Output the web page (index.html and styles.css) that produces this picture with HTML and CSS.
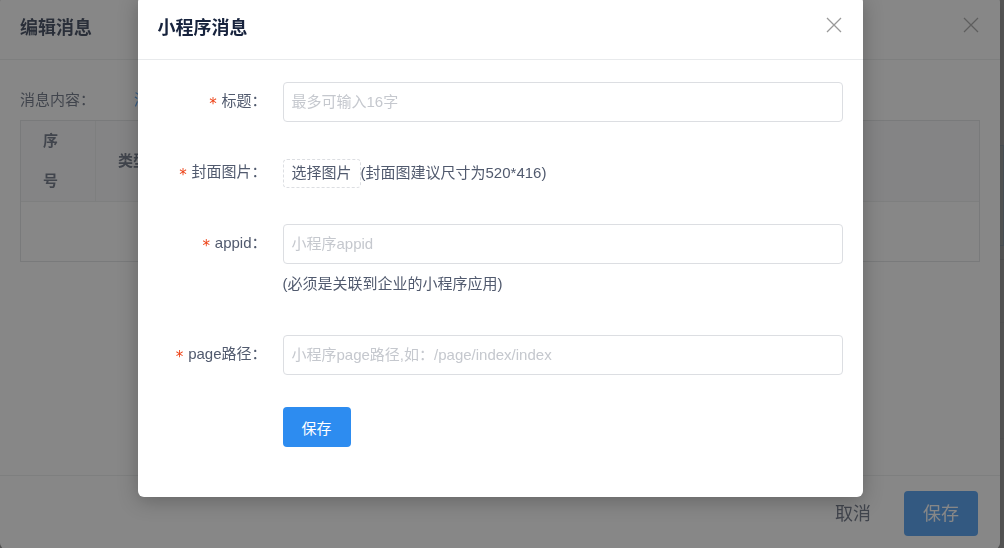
FILE: index.html
```
<!DOCTYPE html>
<html lang="zh-CN">
<head>
    <meta charset="UTF-8">
    <meta name="viewport" content="width=device-width, initial-scale=1.0">
    <title>编辑消息</title>
    <link rel="stylesheet" href="styles.css">
</head>
<body>
    <!-- page behind the dialogs -->
    <div class="page">
        <div class="page-alert"></div>
        <div class="page-row"></div>
        <div class="page-panel"></div>
    </div>

    <!-- edit message dialog -->
    <div class="mask">
        <section class="dialog dialog-edit">
            <header class="dialog-header">
                <h2>编辑消息</h2>
                <button type="button" class="close" aria-label="关闭">
                    <svg width="16" height="16" viewBox="0 0 16 16"><path d="M1 1L15 15M15 1L1 15"/></svg>
                </button>
            </header>
            <div class="edit-body">
                <div class="content-row">
                    <span class="content-label">消息内容：</span>
                    <a href="#">添加</a>
                </div>
                <table class="message-table">
                    <thead>
                        <tr>
                            <th class="col-index">序号</th>
                            <th>类型</th>
                        </tr>
                    </thead>
                    <tbody>
                        <tr>
                            <td colspan="2"></td>
                        </tr>
                    </tbody>
                </table>
            </div>
            <footer class="dialog-footer">
                <button type="button" class="btn-text">取消</button>
                <button type="button" class="btn-primary btn-large">保存</button>
            </footer>
        </section>
    </div>

    <!-- mini program dialog -->
    <div class="mask">
        <section class="dialog dialog-program">
            <header class="dialog-header">
                <h2>小程序消息</h2>
                <button type="button" class="close" aria-label="关闭">
                    <svg width="16" height="16" viewBox="0 0 16 16"><path d="M1 1L15 15M15 1L1 15"/></svg>
                </button>
            </header>
            <form class="program-form">
                <div class="form-item">
                    <label for="title">标题：</label>
                    <div class="form-content">
                        <input type="text" id="title" placeholder="最多可输入16字">
                    </div>
                </div>
                <div class="form-item">
                    <label for="cover">封面图片：</label>
                    <div class="form-content form-inline">
                        <button type="button" id="cover" class="btn-dashed">选择图片</button>
                        <span>(封面图建议尺寸为520*416)</span>
                    </div>
                </div>
                <div class="form-item">
                    <label for="appid">appid：</label>
                    <div class="form-content">
                        <input type="text" id="appid" placeholder="小程序appid">
                        <p>(必须是关联到企业的小程序应用)</p>
                    </div>
                </div>
                <div class="form-item">
                    <label for="path">page路径：</label>
                    <div class="form-content">
                        <input type="text" id="path" placeholder="小程序page路径,如：/page/index/index">
                    </div>
                </div>
                <div class="form-actions">
                    <button type="button" class="btn-primary">保存</button>
                </div>
            </form>
        </section>
    </div>
</body>
</html>
```
FILE: styles.css
```
* {
    box-sizing: border-box;
}

body {
    margin: 0;
    min-height: 100vh;
    overflow: hidden;
    background-color: #fff;
    color: #515a6e;
    font-family: "Liberation Sans", "Noto Sans CJK SC", sans-serif;
    font-size: 15px;
    line-height: 40px;
}

button,
input {
    font-family: inherit;
    font-size: inherit;
}

button {
    padding: 0;
    border: none;
    background: none;
    color: inherit;
    cursor: pointer;
}

.page {
    height: 100vh;
    padding-top: 145px;
}

.page-alert {
    height: 101px;
    background-color: #f0faff;
    border: 1px solid #abdcff;
}

.page-row {
    height: 64px;
    margin-top: 13px;
    border-top: 1px solid #dcdee2;
    border-bottom: 1px solid #e8eaec;
}

.page-panel {
    height: 116px;
    border-bottom: 1px solid #e8eaec;
}

.mask {
    position: fixed;
    inset: 0;
    padding-right: 4px;
    background-color: rgba(55, 55, 55, 0.6);
}

.dialog {
    margin: -4px auto 0;
    background-color: #fff;
    border-radius: 6px;
    box-shadow: 0 4px 20px rgba(0, 0, 0, 0.25);
}

.dialog-edit {
    display: flex;
    flex-direction: column;
    min-height: calc(100vh + 5px);
}

.dialog-program {
    width: 725px;
    max-width: 100%;
}

.dialog-header {
    display: flex;
    align-items: center;
    justify-content: space-between;
    height: 64px;
    padding: 0 20px;
    border-bottom: 1px solid #e8eaec;
}

.dialog-header h2 {
    margin: 0;
    color: #17233d;
    font-size: 18px;
    line-height: 40px;
}

.close {
    display: flex;
    padding: 0 1px 5px 0;
}

.close svg {
    fill: none;
    stroke: #999;
    stroke-width: 1.3;
}

/* edit message */
.edit-body {
    flex: 1;
    padding: 20px;
}

.content-row {
    display: flex;
}

.content-label {
    width: 114px;
}

.content-row a {
    color: #2d8cf0;
    text-decoration: none;
}

.message-table {
    width: 100%;
    table-layout: fixed;
    border: 1px solid #dcdee2;
    border-spacing: 0;
}

.message-table th {
    padding: 0 22px;
    background-color: #f8f8f9;
    border-bottom: 1px solid #e8eaec;
    text-align: left;
}

.message-table .col-index {
    width: 75px;
    padding-right: 26px;
    border-right: 1px solid #e8eaec;
    word-break: break-all;
}

.message-table td {
    height: 59px;
}

.dialog-footer {
    display: flex;
    justify-content: flex-end;
    gap: 33px;
    padding: 15px 22px 13px;
    border-top: 1px solid #e8eaec;
    font-size: 18px;
}

.btn-text {
    padding-bottom: 3px;
}

.btn-primary {
    height: 40px;
    padding: 0 19px;
    border-radius: 4px;
    background-color: #2d8cf0;
    color: #fff;
}

.btn-large {
    height: 45px;
    padding-bottom: 3px;
}

/* mini program form */
.program-form {
    display: flex;
    flex-direction: column;
    gap: 31px;
    padding: 22px 20px 50px;
}

.form-item {
    display: flex;
}

.form-item label {
    width: 125px;
    padding-right: 16px;
    line-height: 38px;
    text-align: right;
}

.form-item label::before {
    content: "*";
    margin-right: 4px;
    color: #ed4014;
    font-family: "DejaVu Sans Mono", monospace;
    line-height: 1;
    vertical-align: -3px;
}

.form-content {
    flex: 1;
}

.form-content input {
    display: block;
    width: 100%;
    height: 40px;
    padding: 0 8px 2px;
    border: 1px solid #dcdee2;
    border-radius: 4px;
    color: #515a6e;
}

.form-content input::placeholder {
    color: #c5c8ce;
}

.form-content p {
    margin: 0;
}

.form-inline {
    display: flex;
    align-items: center;
    line-height: 38px;
}

.btn-dashed {
    height: 29px;
    padding: 0 8px 3px;
    border: 1px dashed #dcdee2;
    border-radius: 4px;
}

.form-inline,
.form-actions {
    min-height: 40px;
}

.form-actions {
    display: flex;
    padding: 1px 0 0 125px;
}
```
